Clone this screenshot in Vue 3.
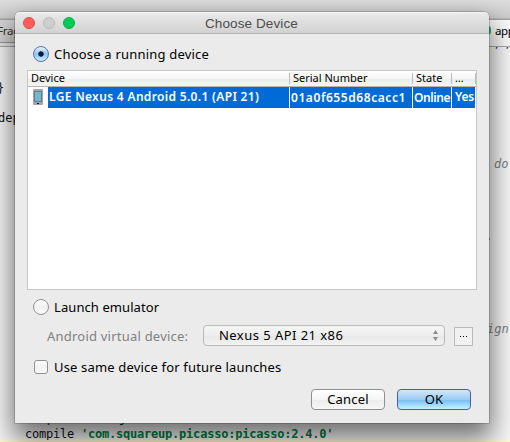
<script setup>
import { ref } from 'vue'

const mode = ref('running')
const columns = ['Device', 'Serial Number', 'State', '…']
const device = {
  name: 'LGE Nexus 4 Android 5.0.1 (API 21)',
  serial: '01a0f655d68cacc1',
  state: 'Online',
  compatible: 'Yes',
}
</script>

<template>
  <div class="screen">
    <div class="toolbar"></div>
    <div class="tabs">
      <div class="tab-left">Frag</div>
      <div class="tab-right"><i class="gradle"></i><span>app</span></div>
    </div>
    <div class="editor">
      <span class="code brace">}</span>
      <span class="code dep">dep</span>
      <span class="code marks">, ,</span>
      <span class="code note do">do</span>
      <span class="code note dot">.</span>
      <span class="code note ign">ign</span>
      <span class="code hidden-line">compile 'com.jakewharton:butterknife:6.1.0'</span>
      <span class="code compile">compile <b>'com.squareup.picasso:picasso:2.4.0'</b></span>
      <div class="caret-line"></div>
    </div>

    <div class="dialog">
      <header class="titlebar">
        <i class="light red"></i><i class="light gray"></i><i class="light green"></i>
        <span class="title">Choose Device</span>
      </header>

      <div class="choice running" @click="mode = 'running'">
        <i class="radio" :class="{ on: mode === 'running' }"></i>
        <span class="t-running">Choose a running device</span>
      </div>

      <div class="table">
        <div class="row head">
          <div v-for="(c, i) in columns" :key="c" class="th" :class="'h' + i"><span>{{ c }}</span></div>
        </div>
        <div class="row data">
          <div class="icon-cell">
            <svg width="10" height="16" viewBox="0 0 10 16">
              <rect width="10" height="16" rx="1" fill="#a5a5a5" />
              <rect x="1.5" y="2.5" width="7" height="10" fill="#74b5cf" stroke="#5f7f8c" />
              <rect x="4" y="14" width="2" height="1" fill="#111" />
            </svg>
          </div>
          <div class="cell name"><span>{{ device.name }}</span></div>
          <div class="cell serial"><span>{{ device.serial }}</span></div>
          <div class="cell state"><span>{{ device.state }}</span></div>
          <div class="cell yes"><span>{{ device.compatible }}</span></div>
        </div>
      </div>

      <div class="choice emulator" @click="mode = 'emulator'">
        <i class="radio" :class="{ on: mode === 'emulator' }"></i>
        <span class="t-emulator">Launch emulator</span>
      </div>

      <div class="avd">
        <span class="avd-label">Android virtual device:</span>
        <div class="select">
          <span>Nexus 5 API 21 x86</span>
          <svg width="7" height="11" viewBox="0 0 7 11"><path d="M3.5 0 6 4H1zM3.5 11 1 7h5z" fill="#8b8b8b" /></svg>
        </div>
        <div class="more"><i></i><i></i><i></i></div>
      </div>

      <div class="same"><i class="check"></i><span>Use same device for future launches</span></div>

      <div class="buttons">
        <div class="btn cancel"><span>Cancel</span></div>
        <div class="btn ok"><span>OK</span></div>
      </div>
    </div>
  </div>
</template>

<style>
body { margin: 0; overflow: hidden; }
</style>

<style scoped>
* { box-sizing: border-box; }
i { display: block; font-style: normal; flex: none; }
.screen {
  position: relative; width: 510px; height: 442px; overflow: hidden; background: #f8f8f8;
  font-family: "Noto Sans", sans-serif; font-size: 13px; color: #000; white-space: nowrap;
}
.toolbar { height: 20px; background: linear-gradient(#dedede, #cbcbcb 18px, #a5a5a5 19px); }
.tabs { height: 27px; display: flex; justify-content: space-between; background: #e9e9e9; border-bottom: 1px solid #a9a9a9; }
.tab-left { width: 40px; height: 23px; background: #d6d6d6; border-bottom: 1px solid #999; font-size: 11.5px; line-height: 22px; text-indent: -3px; letter-spacing: -.2px; color: #333; }
.tab-right { width: 25px; display: flex; align-items: flex-start; background: #fcfcfc; font-size: 11.5px; letter-spacing: -.4px; line-height: 22px; overflow: hidden; }
.gradle { width: 6px; height: 9px; margin: 6px 4px 0 0; border-right: 2px solid #36b391; border-bottom: 2px solid #a6c585; border-radius: 3px; }
.editor { height: 395px; position: relative; }
.code { position: absolute; font-family: "DejaVu Sans Mono", monospace; font-size: 12px; line-height: 16px; color: #111; }
.brace { left: -3px; top: 33px; }
.dep { left: -2px; top: 63px; }
.marks { left: 494px; top: -10px; clip-path: inset(10px 0 0 0); font-size: 9px; }
.note { color: #808080; font-style: italic; }
.do { left: 494px; top: 109px; }
.dot { left: 486px; top: 181px; }
.ign { left: 487px; top: 274px; }
.hidden-line { left: 25px; top: 363px; }
.compile { left: 25px; top: 379px; letter-spacing: -.22px; }
.compile b { color: #008040; }
.caret-line { position: absolute; left: 0; right: 0; bottom: 0; height: 2px; background: #fffad1; }

.dialog {
  position: absolute; left: 15px; top: 12px; width: 474px; height: 411px; display: flex; flex-direction: column;
  background: #ebebeb; border-radius: 5px 5px 0 0;
  box-shadow: 0 0 0 .5px rgba(0,0,0,.35), 0 13px 27px 3px rgba(0,0,0,.55);
}
.titlebar {
  height: 22px; display: flex; align-items: center; padding-left: 8px; gap: 8px; border-radius: 5px 5px 0 0;
  background: linear-gradient(#e9e9e9, #d2d2d2); border-top: 1px solid #f6f6f6; border-bottom: 1px solid #b4b4b4;
}
.light { width: 12px; height: 12px; border-radius: 50%; border: 1px solid; }
.red { background: #ff5d59; border-color: #e24b47; }
.gray { background: #cfcfcf; border-color: #b9b9b9; }
.green { background: #00ca56; border-color: #00b146; }
.title { margin-left: 122px; padding-top: 2px; font-family: "Liberation Sans", sans-serif; font-size: 13.5px; letter-spacing: .1px; color: #4d4d4d; line-height: 20px; }
.choice { display: flex; align-items: center; gap: 5px; padding-left: 18px; }
.running { height: 36px; padding-top: 5px; }
.running .radio { margin-top: -1px; }
.running span { margin-top: -2px; }
.radio { width: 16px; height: 16px; border-radius: 50%; border: 1px solid #909090; background: linear-gradient(#fff, #f1f1f1 50%, #fff); }
.radio.on { border-color: #5376a5; background: radial-gradient(circle, #0b1b33 0 2.3px, transparent 3.1px), linear-gradient(#e9f4ff, #8fc2f3 50%, #c8f0ff); }
.t-running { letter-spacing: .2px; }

.table { margin-left: 12px; width: 450px; height: 220px; background: #fff; border: 1px solid #c6c8c8; }
.row { display: grid; grid-template-columns: 262px 123px 39px 24px; }
.head { height: 16px; background: linear-gradient(#fff, #f6f6f6 50%, #ececec 55%, #f5f5f5); border-bottom: 1px solid #b5b5b5; font-size: 11px; line-height: 14px; }
.th { position: relative; padding-left: 3px; overflow: hidden; }
.th::after { content: ""; position: absolute; right: 0; top: 2px; width: 1px; height: 11px; background: #bdbdbd; }
.data { grid-template-columns: 20px 242px 123px 39px 24px; height: 20px; color: #fff; font-size: 12px; font-weight: 600; line-height: 19px; }
.icon-cell { padding: 2px 0 0 5px; line-height: 0; }
.cell { background: #006bd6; padding-left: 1px; border-right: 1px solid #fff; }
.name { letter-spacing: .33px; }
.serial { letter-spacing: .57px; }
.serial, .state { line-height: 21px; }
.state { letter-spacing: -.4px; }
.yes { padding-left: 3px; letter-spacing: -.2px; border-right-width: 1px; }

.emulator { height: 34px; }
.t-emulator { letter-spacing: .08px; }
.avd { display: flex; height: 21px; align-items: center; margin-top: 1px; padding-left: 32px; }
.avd-label { width: 156px; color: #808080; letter-spacing: .22px; }
.select { width: 242px; height: 21px; display: flex; align-items: center; justify-content: space-between; padding: 0 5px 2px 15px; border: 1px solid #b9b9b9; border-radius: 4px; background: linear-gradient(#f6f6f6, #ededed 50%, #e8e8e8 52%, #f2f2f2); letter-spacing: .45px; }
.select svg { margin-top: 2px; }
.more { width: 19px; height: 19px; margin: 2px 0 0 9px; display: flex; justify-content: center; align-items: center; gap: 2px; border: 1px solid #bababa; background: #f1f1f1; }
.more i { width: 1px; height: 1px; background: #000; }
.same { display: flex; align-items: center; gap: 6px; padding-left: 19px; height: 18px; margin-top: 12px; letter-spacing: .17px; }
.check { width: 14px; height: 14px; border: 1px solid #909090; border-radius: 3px; background: linear-gradient(#fff, #f1f1f1 50%, #fafafa); }
.buttons { display: flex; gap: 12px; padding-left: 296px; margin-top: 13px; }
.btn { width: 74px; height: 21px; border: 1px solid #8f8f8f; border-radius: 4px; display: flex; align-items: center; justify-content: center; padding-bottom: 2px; letter-spacing: .2px; background: linear-gradient(#fff, #f5f5f5 50%, #ebebeb 52%, #f7f7f7); }
.ok { border-color: #535c9a; background: linear-gradient(#d3e8fb, #9ccaf3 50%, #79bdf4 54%, #c4f4ff); }
</style>
